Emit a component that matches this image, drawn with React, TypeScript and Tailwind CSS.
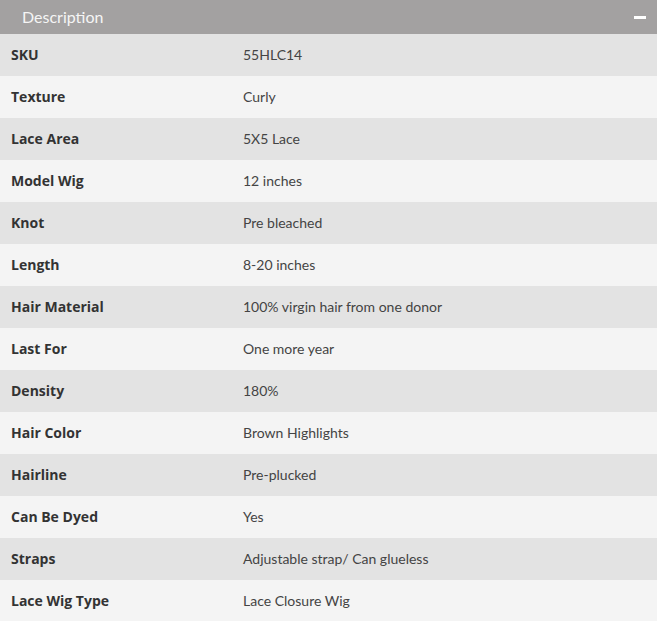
import React from "react";

const rows: [string, string][] = [
  ["SKU", "55HLC14"],
  ["Texture", "Curly"],
  ["Lace Area", "5X5 Lace"],
  ["Model Wig", "12 inches"],
  ["Knot", "Pre bleached"],
  ["Length", "8-20 inches"],
  ["Hair Material", "100% virgin hair from one donor"],
  ["Last For", "One more year"],
  ["Density", "180%"],
  ["Hair Color", "Brown Highlights"],
  ["Hairline", "Pre-plucked"],
  ["Can Be Dyed", "Yes"],
  ["Straps", "Adjustable strap/ Can glueless"],
  ["Lace Wig Type", "Lace Closure Wig"],
];

export default function App() {
  return (
    <div className="w-[657px] bg-white" style={{ fontFamily: "Lato, 'Liberation Sans', sans-serif" }}>
      <div className="h-[34px] bg-[#a3a1a1] flex items-center justify-between pl-[22px] pr-[11px]">
        <span className="text-[16px] text-[#f5f5f5]">Description</span>
        <span className="block w-[12px] h-[3px] bg-white" />
      </div>
      {rows.map(([k, v], i) => (
        <div
          key={k}
          className={`h-[42px] pb-[2px] flex items-center text-[14px] ${i % 2 === 0 ? "bg-[#e3e3e3]" : "bg-[#f4f4f4]"}`}
        >
          <div
            className="w-[243px] pl-[11px] font-bold text-[#333333]"
            style={{ fontFamily: "'Open Sans', 'Liberation Sans', sans-serif" }}
          >
            {k}
          </div>
          <div className="text-[#444444]">{v}</div>
        </div>
      ))}
    </div>
  );
}
